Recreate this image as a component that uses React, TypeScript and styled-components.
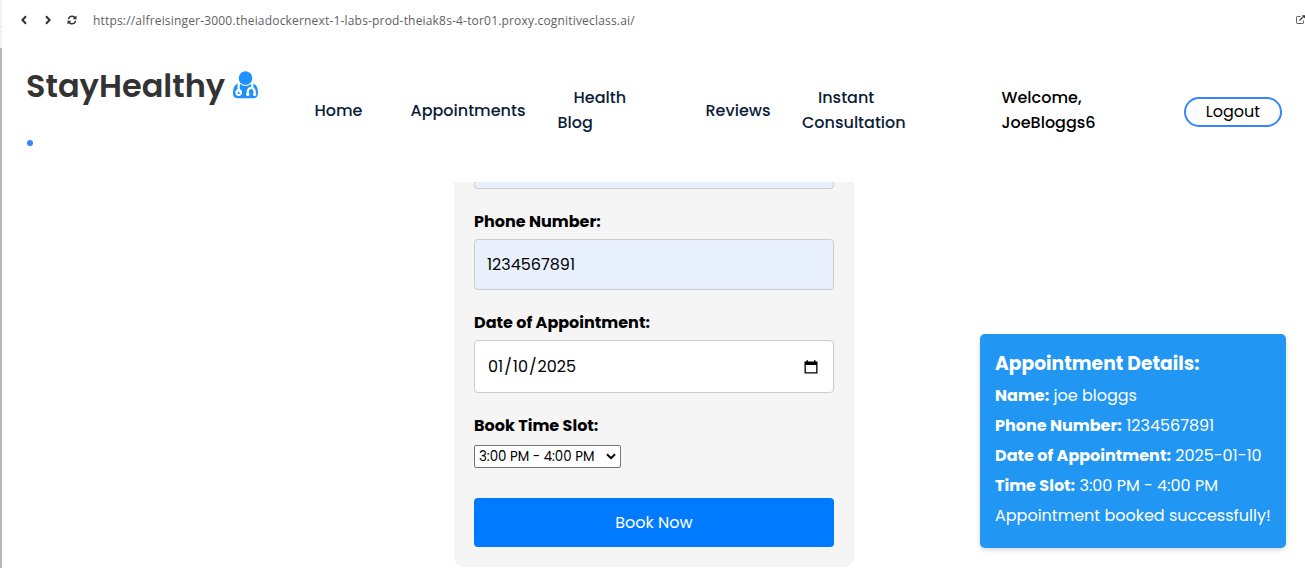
import React from "react";
import styled, { createGlobalStyle } from "styled-components";

const Global = createGlobalStyle`
  * { box-sizing: border-box; }
  body { margin: 0; background: #fff; overflow: hidden; }
  p, h3 { margin: 0; }
`;

const Screen = styled.div`
  display: flex;
  width: 1305px;
  height: 568px;
  overflow: hidden;
  position: relative;
  background: #fff;
  color: #000;
  font: 400 16px/25px Poppins, Inter, sans-serif;
  white-space: nowrap;
`;

const Edge = styled.div`
  width: 2px;
  flex: none;
  background: linear-gradient(#f3f3f3 26px, #dcdcdc 26px 27px, #f3f3f3 27px 48px, #b7b7b7 48px);
`;

const Page = styled.div`
  display: flex;
  flex-direction: column;
  flex: 1;
  min-width: 0;
`;

const Toolbar = styled.div`
  display: flex;
  align-items: center;
  height: 40px;
  padding-left: 17px;
  color: #333;
`;

const ToolIcon = styled.svg<{ $gap: number }>`
  flex: none;
  width: 10px;
  height: 10px;
  margin-right: ${(p) => p.$gap}px;
`;

const Address = styled.div`
  flex: 1;
  padding-top: 1px;
  color: #616161;
  font: 400 12px/20px "Open Sans", sans-serif;
  letter-spacing: 0.18px;
`;

const OpenIcon = styled.svg`
  flex: none;
  width: 10px;
  height: 10px;
`;

const Nav = styled.nav`
  display: grid;
  grid-template-columns: 287.5px 96px 147px 148px 96.5px 199.5px 182.5px 98px;
  align-items: center;
  height: 142px;
  padding-left: 25px;
`;

const Brand = styled.div`
  align-self: start;
  display: flex;
  flex-direction: column;
  padding-top: 22px;
`;

const BrandName = styled.div`
  display: flex;
  align-items: center;
  height: 47px;
  margin-left: -1px;
  font-size: 32px;
  font-weight: 600;
  color: #333;
`;

const DoctorIcon = styled.svg`
  width: 25px;
  height: 28px;
  margin: 0 0 1px 8px;
`;

const Dot = styled.span`
  width: 6px;
  height: 6px;
  margin: 30.5px 0 0 0.3px;
  border-radius: 50%;
  background: #3685fb;
`;

const NavItem = styled.div<{ $wrapped?: boolean }>`
  margin-top: -2px;
  font-weight: 500;
  color: #0b1c39;
  text-indent: ${(p) => (p.$wrapped ? 16 : 0)}px;
`;

const Welcome = styled(NavItem)`
  color: #000;
`;

const Logout = styled.div`
  display: flex;
  align-items: center;
  justify-content: center;
  height: 30px;
  margin-top: 2px;
  padding-bottom: 2px;
  border: 2px solid #3685fb;
  border-radius: 15px;
`;

const Main = styled.main`
  flex: 1;
  min-height: 0;
  padding-left: 452px;
  overflow: hidden;
`;

const Form = styled.div`
  display: flex;
  flex-direction: column;
  width: 400px;
  height: 385px;
  padding: 0 20px;
  background: #f5f5f5;
  border-radius: 0 0 10px 10px;
`;

const Label = styled.div`
  height: 25px;
  margin-top: 20px;
  font-weight: 700;
`;

const Field = styled.div<{ $height: number; $filled?: boolean }>`
  display: flex;
  align-items: center;
  justify-content: space-between;
  height: ${(p) => p.$height}px;
  margin-top: 5px;
  padding: 0 15px 0 12px;
  border: 1px solid #ccc;
  border-radius: 4px;
  background: ${(p) => (p.$filled ? "#e8f0fe" : "#fff")};
`;

const FieldEnd = styled.div`
  height: 7px;
  border: 1px solid #ccc;
  border-top: 0;
  border-radius: 0 0 4px 4px;
  background: #e8f0fe;
`;

const DateValue = styled.span`
  display: flex;
  gap: 1px;
  padding-left: 1px;
`;

const CalendarIcon = styled.svg`
  width: 14px;
  height: 14px;
`;

const Select = styled.div`
  display: flex;
  align-items: center;
  justify-content: space-between;
  width: 147px;
  height: 23px;
  margin-top: 7px;
  padding: 0 4px;
  border: 1px solid #767676;
  border-radius: 2px;
  background: #fff;
  font-size: 13.333px;
`;

const Caret = styled.svg`
  width: 10px;
  height: 7px;
`;

const BookButton = styled.div`
  display: flex;
  align-items: center;
  justify-content: center;
  height: 49px;
  margin-top: 30px;
  border-radius: 4px;
  background: #007bff;
  color: #fff;
`;

const Toast = styled.aside`
  position: absolute;
  left: 980px;
  top: 334px;
  width: 306px;
  height: 214px;
  padding: 15px;
  border-radius: 5px;
  background: #2196f3;
  box-shadow: 0 2px 5px rgba(0, 0, 0, 0.15);
  color: #fff;
`;

const ToastTitle = styled.h3`
  height: 32px;
  font-size: 18.72px;
  font-weight: 700;
  line-height: 29px;
`;

const ToastRow = styled.p`
  height: 30px;
  line-height: 30px;

  strong { font-weight: 700; }
`;

const details = [
  { label: "Name:", value: "joe bloggs" },
  { label: "Phone Number:", value: "1234567891" },
  { label: "Date of Appointment:", value: "2025-01-10" },
  { label: "Time Slot:", value: "3:00 PM - 4:00 PM" },
];

export default function App() {
  return (
    <>
      <Global />
      <Screen>
        <Edge />
        <Page>
          <Toolbar>
            <ToolIcon $gap={14} viewBox="0 0 10 10">
              <path d="M7 1.2 3.4 5 7 8.8" fill="none" stroke="currentColor" strokeWidth="2" />
            </ToolIcon>
            <ToolIcon $gap={14} viewBox="0 0 10 10">
              <path d="M3 1.2 6.6 5 3 8.8" fill="none" stroke="currentColor" strokeWidth="2" />
            </ToolIcon>
            <ToolIcon $gap={16} viewBox="-80 48 1696 1696">
              <path
                fill="currentColor"
                d="M1511 1056q0 5-1 7-64 268-268 434.500t-478 166.500q-146 0-282.500-55t-243.500-157l-129 129q-19 19-45 19t-45-19-19-45v-448q0-26 19-45t45-19h448q26 0 45 19t19 45-19 45l-137 137q71 66 161 102t187 36q134 0 250-65t186-179q11-17 53-117 8-23 30-23h192q13 0 22.500 9.500t9.500 22.500zm25-800v448q0 26-19 45t-45 19h-448q-26 0-45-19t-19-45 19-45l138-138q-148-137-349-137-134 0-250 65t-186 179q-11 17-53 117-8 23-30 23h-199q-13 0-22.500-9.500t-9.500-22.500v-7q65-268 270-434.500t480-166.500q146 0 284 55.500t245 156.500l130-129q19-19 45-19t45 19 19 45z"
              />
            </ToolIcon>
            <Address>
              https://alfreisinger-3000.theiadockernext-1-labs-prod-theiak8s-4-tor01.proxy.cognitiveclass.ai/
            </Address>
            <OpenIcon viewBox="0 0 10 10" fill="none" stroke="currentColor">
              <path d="M5.500 1.500H2.300Q1.500 1.500 1.500 2.300V7.700Q1.500 8.500 2.300 8.500H7.700Q8.500 8.500 8.500 7.700V5.500" strokeWidth="0.8" />
              <path d="M4.500 5.500 8.700 1.300" strokeWidth="1.200" />
              <path d="M6.800 0.300H10V3.500Z" fill="currentColor" stroke="none" />
            </OpenIcon>
          </Toolbar>

          <Nav>
            <Brand>
              <BrandName>
                StayHealthy
                <DoctorIcon viewBox="0 128 1408 1536">
                  <path
                    fill="#1e90ff"
                    d="M384 1344q0 26-19 45t-45 19-45-19-19-45 19-45 45-19 45 19 19 45zm1024 37q0 121-73 192t-194 71h-874q-121 0-194-71t-73-192q0-68 5.500-131t24-138 47.500-132.500 81-103 120-60.500q-22 52-22 120v203q-58 20-93 70t-35 111q0 80 56 136t136 56 136-56 56-136q0-61-35.500-111t-92.500-70v-203q0-62 25-93 132 104 295 104t295-104q25 31 25 93v64q-106 0-181 75t-75 181v89q-32 29-32 71 0 40 28 68t68 28 68-28 28-68q0-42-32-71v-89q0-52 38-90t90-38 90 38 38 90v89q-32 29-32 71 0 40 28 68t68 28 68-28 28-68q0-42-32-71v-89q0-68-34.500-127.500t-93.500-93.500q0-10 .5-42.500t0-48-2.500-41.500-7-47-13-40q68 15 120 60.500t81 103 47.500 132.500 24 138 5.500 131zm-320-869q0 159-112.500 271.500t-271.500 112.500-271.500-112.500-112.500-271.500 112.500-271.500 271.500-112.500 271.500 112.500 112.500 271.500z"
                  />
                </DoctorIcon>
              </BrandName>
              <Dot />
            </Brand>
            <NavItem>Home</NavItem>
            <NavItem>Appointments</NavItem>
            <NavItem $wrapped>
              Health
              <br />
              Blog
            </NavItem>
            <NavItem>Reviews</NavItem>
            <NavItem $wrapped>
              Instant
              <br />
              Consultation
            </NavItem>
            <Welcome>
              Welcome,
              <br />
              JoeBloggs6
            </Welcome>
            <Logout>Logout</Logout>
          </Nav>

          <Main>
            <Form>
              <FieldEnd />
              <Label>Phone Number:</Label>
              <Field $height={51} $filled>1234567891</Field>
              <Label>Date of Appointment:</Label>
              <Field $height={53}>
                <DateValue>
                  <span>01</span>
                  <span>/</span>
                  <span>10</span>
                  <span>/</span>
                  <span>2025</span>
                </DateValue>
                <CalendarIcon viewBox="0 0 14 14">
                  <path d="M.5 1.500H2.500V.3H4V1.500H10V.3H11.500V1.500H13.500V13.500H.5zM1.800 5V12.200H12.200V5z" fillRule="evenodd" />
                </CalendarIcon>
              </Field>
              <Label>Book Time Slot:</Label>
              <Select>
                3:00 PM - 4:00 PM
                <Caret viewBox="0 0 10 7">
                  <path d="M1 1.300 5 5.200 9 1.300" fill="none" stroke="#000" strokeWidth="2" />
                </Caret>
              </Select>
              <BookButton>Book Now</BookButton>
            </Form>
          </Main>
        </Page>

        <Toast>
          <ToastTitle>Appointment Details:</ToastTitle>
          {details.map((d) => (
            <ToastRow key={d.label}>
              <strong>{d.label}</strong> {d.value}
            </ToastRow>
          ))}
          <ToastRow>Appointment booked successfully!</ToastRow>
        </Toast>
      </Screen>
    </>
  );
}
